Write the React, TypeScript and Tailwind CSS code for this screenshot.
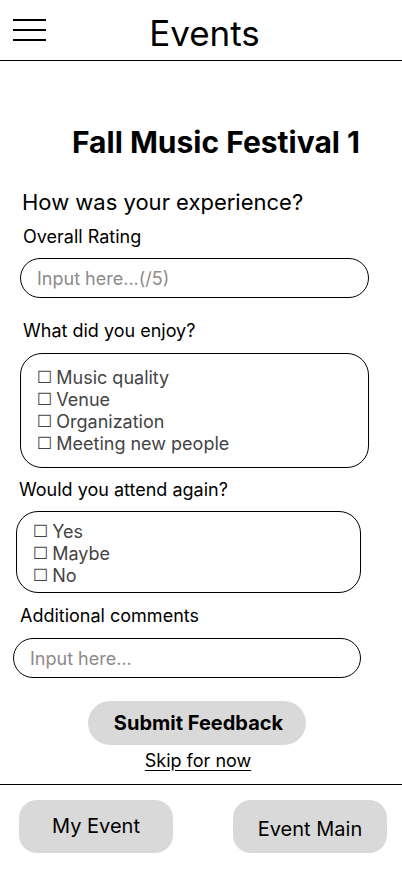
const enjoyOptions = ['Music quality', 'Venue', 'Organization', 'Meeting new people']
const attendOptions = ['Yes', 'Maybe', 'No']

function CheckItem({ label }: { label: string }) {
  return (
    <div className="h-[22px] flex items-center text-[18px] text-[#444444]">
      <span className="font-['DejaVu_Sans',sans-serif] text-[17px] leading-none mr-[4px]">☐</span>
      {label}
    </div>
  )
}

export default function App() {
  return (
    <div className="w-[402px] h-[874px] bg-white text-black font-[Inter,sans-serif] flex flex-col overflow-hidden">
      <header className="h-[61px] shrink-0 border-b border-black grid grid-cols-[1fr_auto_1fr] items-center">
        <div className="ml-[13px] w-[33px] flex flex-col gap-[8px]">
          <div className="h-[2px] bg-black" />
          <div className="h-[2px] bg-black" />
          <div className="h-[2px] bg-black" />
        </div>
        <h1 className="text-[35px] leading-none pl-[7px] mt-[6px]">Events</h1>
        <div />
      </header>

      <main className="flex flex-col">
        <h2 className="mt-[63px] ml-[72px] text-[30px] leading-[36px] font-bold">Fall Music Festival 1</h2>

        <p className="mt-[30px] ml-[22px] text-[22px] leading-[24px]">How was your experience?</p>

        <label className="mt-[13px] ml-[23px] text-[18px] leading-[20px]">Overall Rating</label>
        <div className="mt-[11px] ml-[20px] w-[349px] h-[40px] rounded-full border border-black flex items-center pl-[16px] text-[18px] text-[#8e8a8a]">
          Input here...(/5)
        </div>

        <label className="mt-[23px] ml-[23px] text-[18px] leading-[20px]">What did you enjoy?</label>
        <div className="mt-[12px] ml-[20px] w-[349px] h-[115px] rounded-[22px] border border-black pt-[12px] pl-[16px]">
          {enjoyOptions.map((o) => (
            <CheckItem key={o} label={o} />
          ))}
        </div>

        <label className="mt-[12px] ml-[19px] text-[18px] leading-[20px]">Would you attend again?</label>
        <div className="mt-[11px] ml-[16px] w-[345px] h-[82px] rounded-[22px] border border-black pt-[8px] pl-[16px]">
          {attendOptions.map((o) => (
            <CheckItem key={o} label={o} />
          ))}
        </div>

        <label className="mt-[13px] ml-[20px] text-[18px] leading-[20px]">Additional comments</label>
        <div className="mt-[12px] ml-[13px] w-[348px] h-[40px] rounded-full border border-black flex items-center pl-[16px] text-[18px] text-[#8e8a8a]">
          Input here...
        </div>

        <button className="mt-[23px] ml-[88px] w-[218px] h-[44px] rounded-full bg-[#d9d9d9] text-[20px] font-bold pl-[3px]">
          Submit Feedback
        </button>
        <a className="mt-[6px] self-center ml-[-6px] text-[18px] leading-[20px] underline underline-offset-[3px]">Skip for now</a>
      </main>

      <footer className="mt-[13px] border-t border-black flex justify-between px-[15px] pt-[15px] pl-[19px]">
        <button className="w-[154px] h-[53px] rounded-[18px] bg-[#d9d9d9] text-[20px] pb-[2px]">My Event</button>
        <button className="w-[154px] h-[53px] rounded-[18px] bg-[#d9d9d9] text-[20px] pt-[4px]">Event Main</button>
      </footer>
    </div>
  )
}
